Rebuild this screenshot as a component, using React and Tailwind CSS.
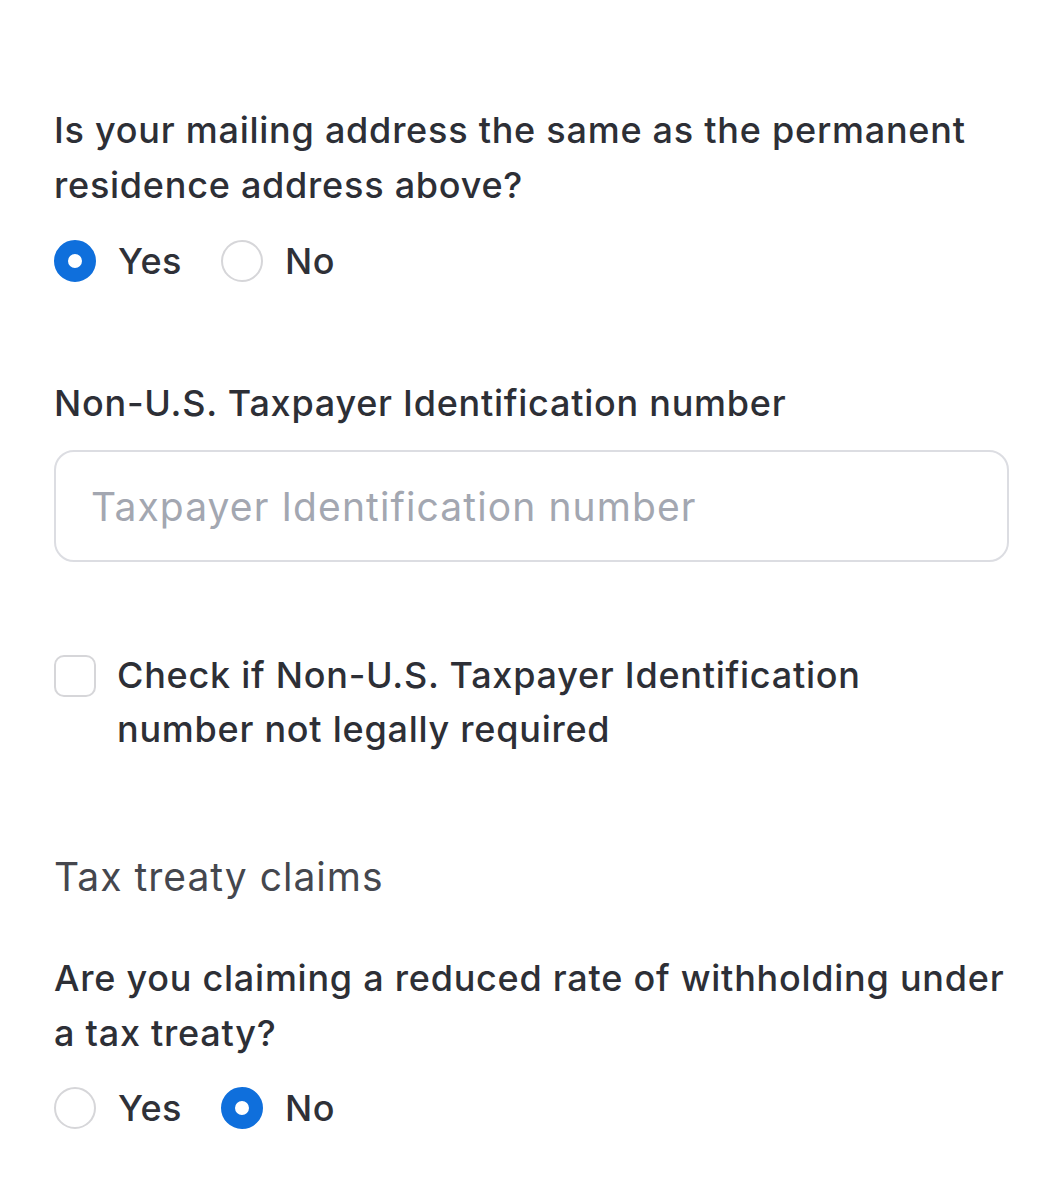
import { useState } from 'react';

function Radio({ checked, label, onClick }) {
  return (
    <button type="button" onClick={onClick} className="flex items-center gap-[22px]">
      <span
        className={
          checked
            ? 'w-[42px] h-[42px] rounded-full border-[14px] border-[#0f6fdc] bg-white'
            : 'w-[42px] h-[42px] rounded-full border-[2px] border-[#d6d6d9] bg-white'
        }
      />
      <span className="text-[36px] tracking-[0.5px] font-medium text-[#2f3138]">{label}</span>
    </button>
  );
}

function YesNo({ value, onChange }) {
  return (
    <div className="flex items-center gap-[39px]">
      <Radio checked={value === 'yes'} label="Yes" onClick={() => onChange('yes')} />
      <Radio checked={value === 'no'} label="No" onClick={() => onChange('no')} />
    </div>
  );
}

export default function App() {
  const [mailing, setMailing] = useState('yes');
  const [treaty, setTreaty] = useState('no');
  const [notRequired, setNotRequired] = useState(false);

  return (
    <div className="w-[1061px] h-[1200px] bg-white pl-[54px] pr-[52px] pt-[103px]" style={{ fontFamily: 'Inter, "Noto Sans", sans-serif' }}>
      <p className="text-[36px] leading-[55px] tracking-[0.75px] font-medium text-[#2d2f36] whitespace-nowrap">
        Is your mailing address the same as the permanent
        <br />
        residence address above?
      </p>
      <div className="mt-[21px]">
        <YesNo value={mailing} onChange={setMailing} />
      </div>

      <p className="mt-[88px] text-[36px] leading-[55px] tracking-[0.75px] font-medium text-[#2d2f36]">
        Non-U.S. Taxpayer Identification number
      </p>
      <input
        className="mt-[19px] w-full h-[112px] rounded-[20px] border-[2px] border-[#dcdde2] px-[35px] text-[39px] tracking-[1.1px] text-[#2d2f36] placeholder:text-[#a3a7b1] outline-none"
        placeholder="Taxpayer Identification number"
      />

      <label className="mt-[86px] flex items-start gap-[21px] cursor-pointer">
        <span
          onClick={() => setNotRequired(v => !v)}
          className={
            notRequired
              ? 'mt-[7px] w-[42px] h-[42px] shrink-0 rounded-[10px] bg-[#0f6fdc]'
              : 'mt-[7px] w-[42px] h-[42px] shrink-0 rounded-[10px] border-[2px] border-[#d6d6d9]'
          }
        />
        <span className="text-[36px] leading-[54px] tracking-[0.75px] font-medium text-[#2d2f36] whitespace-nowrap">
          Check if Non-U.S. Taxpayer Identification
          <br />
          number not legally required
        </span>
      </label>

      <h2 className="mt-[93px] text-[39px] leading-[55px] tracking-[1px] text-[#45474e]">Tax treaty claims</h2>

      <p className="mt-[47px] text-[36px] leading-[55px] tracking-[0.75px] font-medium text-[#2d2f36] whitespace-nowrap">
        Are you claiming a reduced rate of withholding under
        <br />
        a tax treaty?
      </p>
      <div className="mt-[20px]">
        <YesNo value={treaty} onChange={setTreaty} />
      </div>
    </div>
  );
}
